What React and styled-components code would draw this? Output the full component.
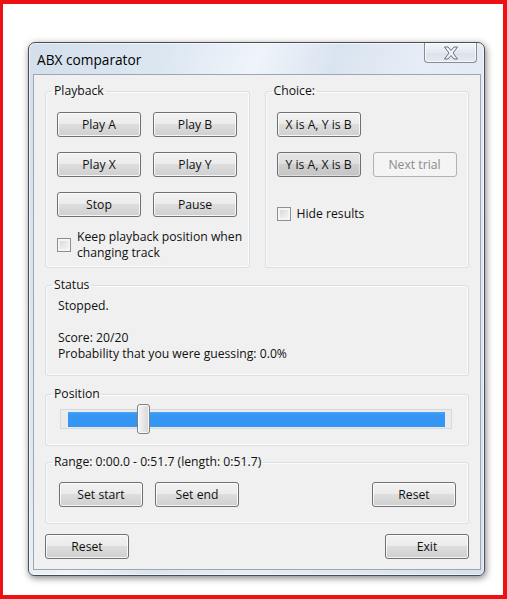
import React from 'react';
import styled, { createGlobalStyle } from 'styled-components';

const GlobalStyle = createGlobalStyle`
  html, body { margin: 0; padding: 0; background: #fff; }
  body {
    font-family: "Open Sans", "Noto Sans", sans-serif;
    font-size: 12.2px;
    color: #111;
  }
  * { box-sizing: border-box; }
`;

const Page = styled.div`
  width: 507px;
  height: 599px;
  border: solid #ee1111;
  border-width: 4px 4px 4px 3px;
  padding: 38px 0 0 25px;
  background: #fff;
`;

const Window = styled.div`
  width: 457px;
  height: 534px;
  display: flex;
  flex-direction: column;
  border: 1px solid #4a4f56;
  border-radius: 7px 7px 6px 6px;
  padding: 0 3px 5px 4px;
  background: linear-gradient(
    110deg,
    #d3dfec 0%,
    #dde7f2 22%,
    #eff4fa 36%,
    #dae4f0 48%,
    #e6edf6 62%,
    #d6e1ee 100%
  );
  box-shadow: 1px 2px 7px rgba(0, 0, 0, 0.5), inset 0 0 0 1px rgba(255, 255, 255, 0.6);
`;

const TitleBar = styled.div`
  height: 31px;
  flex: none;
  display: flex;
  justify-content: space-between;
  align-items: flex-start;
  padding-left: 4px;
`;

const Title = styled.div`
  margin-top: 7px;
  line-height: 20px;
  font-size: 13.7px;
  color: #000;
`;

const CloseButton = styled.div`
  width: 53px;
  height: 20px;
  margin-right: 4px;
  border: 1px solid #858c95;
  border-top: none;
  border-radius: 0 0 4px 4px;
  background: linear-gradient(#f3f6f9, #e3e9ef 50%, #dae2ea 51%, #e4eaf0);
  box-shadow: inset 0 0 0 1px rgba(255, 255, 255, 0.7);
  display: flex;
  align-items: center;
  justify-content: center;
`;

const Client = styled.div`
  flex: 1;
  display: flex;
  flex-direction: column;
  border: 1px solid #9ba7b3;
  background: #f0f0f0;
  padding: 8px 11px 8px 11px;
`;

const TopRow = styled.div`
  display: grid;
  grid-template-columns: 1fr 1fr;
  column-gap: 15px;
`;

const Box = styled.fieldset`
  margin: ${(p) => p.$mt || 0}px 0 0 0;
  padding: ${(p) => p.$pad};
  min-width: 0;
  border: 1px solid #d5dfe5;
  border-radius: 3px;
  box-shadow: inset 0 0 0 1px #fafbfb;
`;

const Caption = styled.legend`
  padding: 0 2px;
  margin-left: ${(p) => p.$ml}px;
  line-height: 16px;
  white-space: nowrap;
`;

function Group({ title, pad, padLeft, mt, children }) {
  return (
    <Box $pad={pad} $mt={mt}>
      <Caption $ml={6 - padLeft}>{title}</Caption>
      {children}
    </Box>
  );
}

const Button = styled.button`
  flex: none;
  width: ${(p) => p.$w || 84}px;
  height: 25px;
  margin: 0;
  padding: 0 0 1px;
  font: inherit;
  color: #111;
  border: 1px solid #707070;
  border-radius: 3px;
  background: ${(p) =>
    p.$pressed
      ? 'linear-gradient(#e5e5e5 0%, #dedede 49%, #cfcfcf 50%, #c4c4c4 100%)'
      : 'linear-gradient(#f2f2f2 0%, #ebebeb 49%, #dddddd 50%, #cfcfcf 100%)'};
  box-shadow: inset 0 0 0 1px rgba(255, 255, 255, ${(p) => (p.$pressed ? 0.45 : 0.8)});
  display: inline-flex;
  align-items: center;
  justify-content: center;
  margin-left: ${(p) => (p.$push ? 'auto' : '0')};

  &:disabled {
    color: #8b8b8b;
    border-color: #adb2b5;
    background: #f4f4f4;
    box-shadow: none;
  }
`;

const ButtonGrid = styled.div`
  display: grid;
  grid-template-columns: 84px 84px;
  column-gap: 12px;
  row-gap: 15px;
`;

const Column = styled.div`
  display: flex;
  flex-direction: column;
  gap: 15px;
`;

const ButtonRow = styled.div`
  display: flex;
  gap: 12px;
  justify-content: ${(p) => p.$justify || 'flex-start'};
  margin-top: ${(p) => p.$mt || 0}px;
`;

const CheckRow = styled.label`
  display: flex;
  align-items: center;
  gap: 6px;
  margin-top: ${(p) => p.$mt || 0}px;
  line-height: 16px;
  white-space: nowrap;
`;

const CheckBox = styled.span`
  flex: none;
  width: 14px;
  height: 14px;
  border: 1px solid #8e8f8f;
  background: linear-gradient(135deg, #cdd1d6 0%, #e6e8ea 50%, #f8f8f8 100%);
  box-shadow: inset 0 0 0 2px #f4f4f4;
`;

const StatusText = styled.div`
  line-height: 16px;
  white-space: pre-line;
`;

const Slider = styled.div`
  position: relative;
  height: 30px;
  padding-top: 5px;
`;

const Track = styled.div`
  height: 20px;
  border: 1px solid #d7d9db;
  background: #e9ebec;
  padding: 2px 6px 1px 7px;
`;

const Selection = styled.div`
  height: 100%;
  background: linear-gradient(#4aa3f7 0%, #3597f3 20%, #3495f2 100%);
`;

const Thumb = styled.div`
  position: absolute;
  top: 0;
  width: 13px;
  height: 30px;
  border: 1px solid #7d8084;
  border-radius: 3px;
  background: linear-gradient(90deg, #f6f6f6 0%, #e4e4e4 55%, #d6d6d6 100%);
  box-shadow: inset 0 0 0 1px rgba(255, 255, 255, 0.8);
`;

function CloseGlyph() {
  return (
    <svg width="16" height="14" viewBox="0 0 16 14">
      <polygon
        points="1.5,1 5,1 8,4.5 11,1 14.5,1 10,7 14.5,13 11,13 8,9.5 5,13 1.5,13 6,7"
        fill="#f2f4f7"
        stroke="#6a717a"
        strokeWidth="1"
        strokeLinejoin="round"
      />
    </svg>
  );
}

const TRACK_LEFT = 8;
const TRACK_SPAN = 377;
const position = 0.2;

export default function App() {
  const thumbLeft = TRACK_LEFT + position * TRACK_SPAN - 6.5;
  return (
    <>
      <GlobalStyle />
      <Page>
        <Window>
          <TitleBar>
            <Title>ABX comparator</Title>
            <CloseButton>
              <CloseGlyph />
            </CloseButton>
          </TitleBar>
          <Client>
            <TopRow>
              <Group title="Playback" pad="13px 11px 6px 11px" padLeft={11}>
                <ButtonGrid>
                  <Button>Play A</Button>
                  <Button>Play B</Button>
                  <Button>Play X</Button>
                  <Button>Play Y</Button>
                  <Button>Stop</Button>
                  <Button>Pause</Button>
                </ButtonGrid>
                <CheckRow $mt={12}>
                  <CheckBox />
                  <span>
                    Keep playback position when
                    <br />
                    changing track
                  </span>
                </CheckRow>
              </Group>
              <Group title="Choice:" pad="13px 11px 7px 11px" padLeft={11}>
                <Column>
                  <ButtonRow>
                    <Button>X is A, Y is B</Button>
                  </ButtonRow>
                  <ButtonRow>
                    <Button $pressed>Y is A, X is B</Button>
                    <Button disabled>Next trial</Button>
                  </ButtonRow>
                  <CheckRow $mt={14}>
                    <CheckBox />
                    <span>Hide results</span>
                  </CheckRow>
                </Column>
              </Group>
            </TopRow>

            <Group title="Status" pad="5px 12px 13px 12px" padLeft={12} mt={9}>
              <StatusText>
                {'Stopped.\n\nScore: 20/20\nProbability that you were guessing: 0.0%'}
              </StatusText>
            </Group>

            <Group title="Position" pad="2px 16px 11px 14px" padLeft={14} mt={10}>
              <Slider>
                <Track>
                  <Selection />
                </Track>
                <Thumb style={{ left: `${thumbLeft}px` }} />
              </Slider>
            </Group>

            <Group
              title="Range: 0:00.0 - 0:51.7 (length: 0:51.7)"
              pad="12px 12px 16px 13px"
              padLeft={13}
              mt={8}
            >
              <ButtonRow>
                <Button>Set start</Button>
                <Button>Set end</Button>
                <Button $push>Reset</Button>
              </ButtonRow>
            </Group>

            <ButtonRow $justify="space-between" $mt={10}>
              <Button>Reset</Button>
              <Button>Exit</Button>
            </ButtonRow>
          </Client>
        </Window>
      </Page>
    </>
  );
}
